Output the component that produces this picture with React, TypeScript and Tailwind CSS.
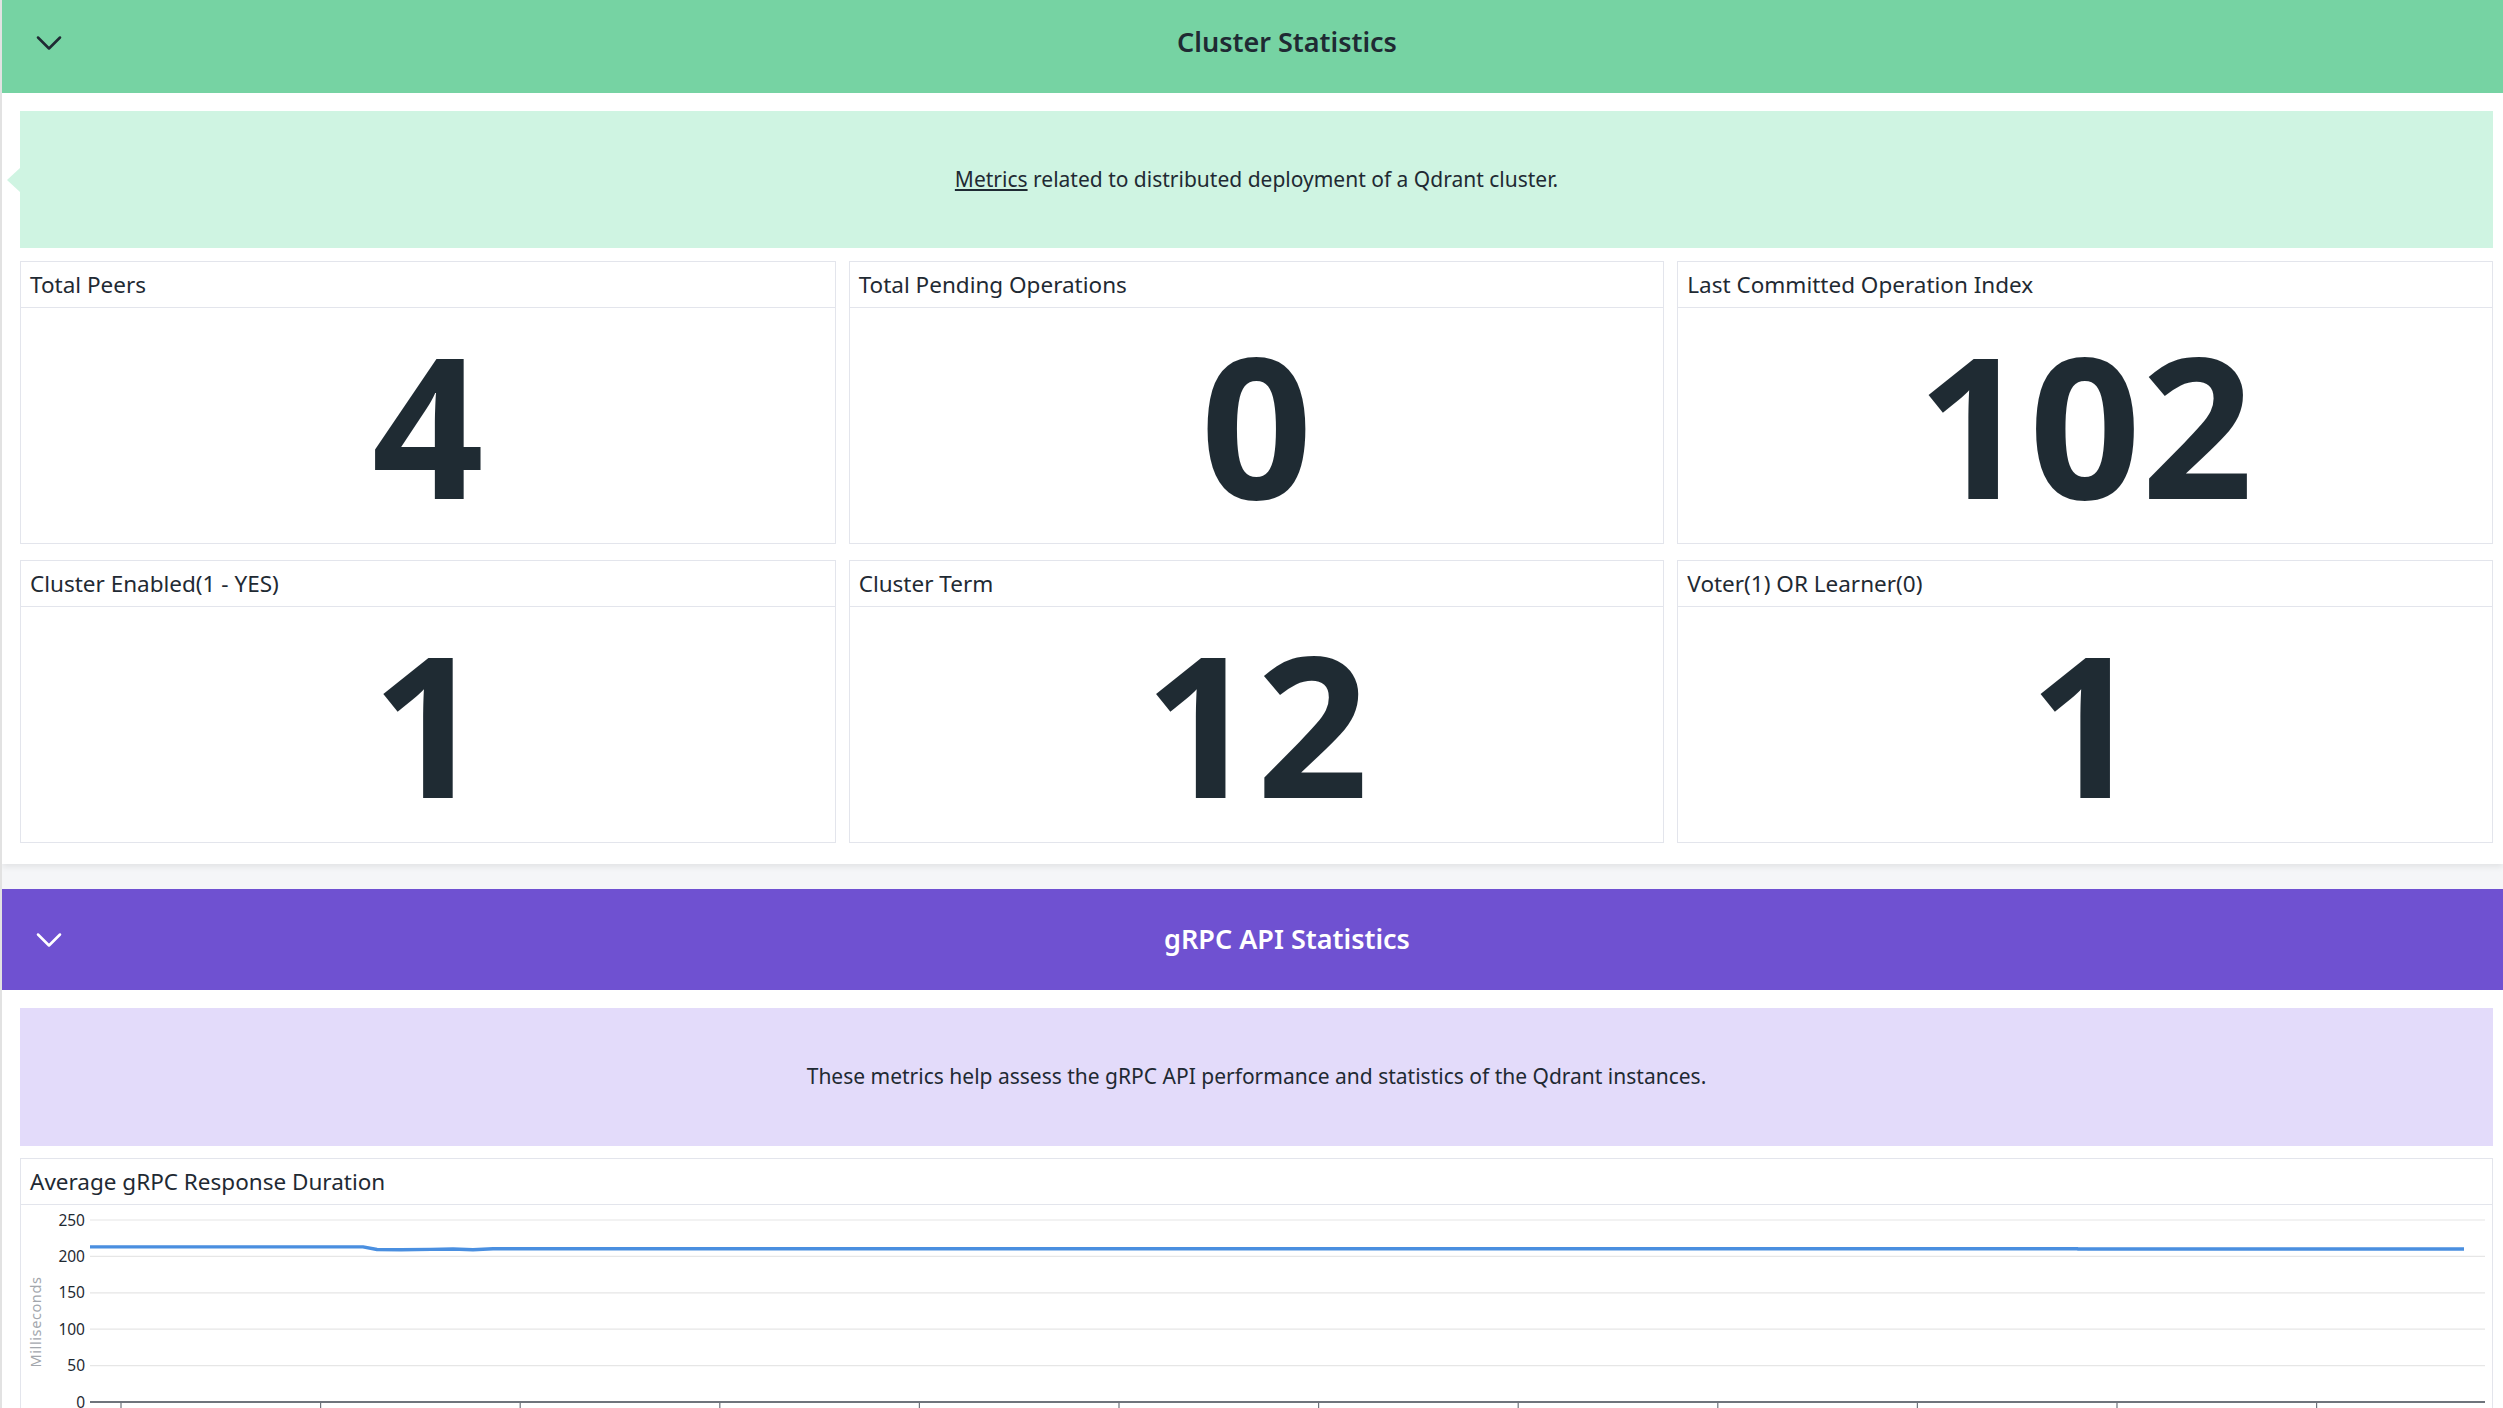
import { ChevronDown } from "lucide-react";

type Stat = { title: string; value: string };

const clusterStats: Stat[] = [
  { title: "Total Peers", value: "4" },
  { title: "Total Pending Operations", value: "0" },
  { title: "Last Committed Operation Index", value: "102" },
  { title: "Cluster Enabled(1 - YES)", value: "1" },
  { title: "Cluster Term", value: "12" },
  { title: "Voter(1) OR Learner(0)", value: "1" },
];

function SectionHeader({
  title,
  className,
  textClass,
}: {
  title: string;
  className: string;
  textClass: string;
}) {
  return (
    <div className={`flex h-[101px] items-center ${className}`}>
      <button type="button" className={`ml-[25px] ${textClass}`} aria-label="Collapse">
        <ChevronDown size={44} strokeWidth={1.4} />
      </button>
      <h2 className={`flex-1 text-center text-[27px] font-semibold ${textClass}`}>{title}</h2>
    </div>
  );
}

function StatCard({ stat }: { stat: Stat }) {
  return (
    <div className="flex h-[283px] flex-col border border-[#e3e5ec] bg-white">
      <div className="flex h-[46px] items-center border-b border-[#e3e5ec] px-[9px] text-[22.5px] text-[#1f2a33]">
        {stat.title}
      </div>
      <div className="flex flex-1 items-center justify-center pb-[6px]">
        <span className="text-[196px] font-bold leading-none text-[#1f2b33]">{stat.value}</span>
      </div>
    </div>
  );
}

// chart coordinates are relative to the card body (left = 20px, top = 1206px on the page)
const yTicks = [250, 200, 150, 100, 50, 0];
const yFor = (v: number) => 197 - v * 0.728;
const xTicks = Array.from({ length: 12 }, (_, i) => 100 + i * 199.6);
const linePoints: [number, number][] = [
  [69, 213],
  [342, 213],
  [356, 209.5],
  [380, 209],
  [410, 209.6],
  [432, 210.2],
  [452, 209.2],
  [472, 210.4],
  [500, 210.6],
  [2056, 210.6],
  [2057, 210.2],
  [2443, 210.2],
];

function DurationChart() {
  const path = linePoints
    .map(([x, v], i) => `${i === 0 ? "M" : "L"}${x} ${yFor(v).toFixed(1)}`)
    .join(" ");
  return (
    <svg width="2472" height="260" className="block font-['Noto_Sans',sans-serif]">
      {yTicks.map((t) => (
        <g key={t}>
          <line
            x1={69}
            x2={2464}
            y1={yFor(t)}
            y2={yFor(t)}
            stroke={t === 0 ? "#6f747c" : "#e6e6e6"}
            strokeWidth={t === 0 ? 2.2 : 1.2}
          />
          <text x={64} y={yFor(t) + 5.5} textAnchor="end" fontSize="15.5" fill="#1f2a33">
            {t}
          </text>
        </g>
      ))}
      {xTicks.map((x) => (
        <line key={x} x1={x} x2={x} y1={197} y2={205} stroke="#6f747c" strokeWidth={1.2} />
      ))}
      <text
        x={0}
        y={0}
        transform="translate(20 117) rotate(-90)"
        textAnchor="middle"
        fontSize="14.5"
        letterSpacing="0.6"
        fill="#a3a7ad"
      >
        Milliseconds
      </text>
      <path d={path} fill="none" stroke="#4a8fe0" strokeWidth={3.4} strokeLinejoin="round" />
    </svg>
  );
}

export default function App() {
  return (
    <div className="h-[1408px] overflow-hidden border-l-2 border-[#e2e2e2] bg-[#f5f6f8] font-['Noto_Sans',sans-serif]">
      {/* Cluster statistics */}
      <section className="-mt-[8px] bg-white pb-[21px] shadow-[0_3px_6px_rgba(0,0,0,0.08)]">
        <SectionHeader title="Cluster Statistics" className="bg-[#76d3a3]" textClass="text-[#1f2a33]" />
        <div className="pl-[18px] pr-[10px] pt-[18px]">
          <div className="relative flex h-[137px] items-center justify-center bg-[#cff4e2] text-[21px] text-[#1f2a33]">
            <span className="absolute -left-[13px] top-[57px] h-0 w-0 border-y-[12px] border-r-[13px] border-y-transparent border-r-[#cff4e2]" />
            <p>
              <a href="#" className="underline underline-offset-2">
                Metrics
              </a>{" "}
              related to distributed deployment of a Qdrant cluster.
            </p>
          </div>
          <div className="mt-[13px] grid grid-cols-3 gap-x-[13px] gap-y-[16px]">
            {clusterStats.map((s) => (
              <StatCard key={s.title} stat={s} />
            ))}
          </div>
        </div>
      </section>

      {/* gRPC statistics */}
      <section className="mt-[25px] bg-white pb-[21px]">
        <SectionHeader title="gRPC API Statistics" className="bg-[#6f51d1]" textClass="text-white" />
        <div className="pl-[18px] pr-[10px] pt-[18px]">
          <div className="flex h-[138px] items-center justify-center bg-[#e3dbfa] text-[21px] text-[#1f2a33]">
            <p>
              These metrics help assess the gRPC API performance and statistics of the Qdrant
              instances.
            </p>
          </div>
          <div className="mt-[12px] border border-[#e3e5ec] bg-white">
            <div className="flex h-[46px] items-center border-b border-[#e3e5ec] px-[9px] text-[22.5px] text-[#1f2a33]">
              Average gRPC Response Duration
            </div>
            <DurationChart />
          </div>
        </div>
      </section>
    </div>
  );
}
